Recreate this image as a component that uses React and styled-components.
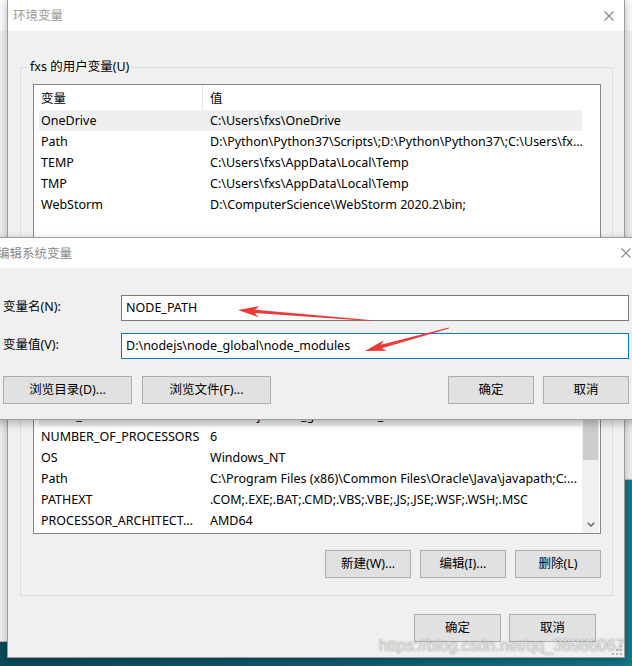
import React from "react";
import styled, { createGlobalStyle } from "styled-components";

const FONT = `"Noto Sans", "Noto Sans CJK SC", sans-serif`;

const GlobalStyle = createGlobalStyle`
  html, body { margin: 0; padding: 0; }
  body { background: #0e5f70; overflow: hidden; }
  * { box-sizing: border-box; }
`;

const Desktop = styled.div`
  position: relative;
  width: 632px;
  height: 666px;
  overflow: hidden;
  background: linear-gradient(90deg, #0b4b5a 0%, #0e5f70 55%, #137a8b 100%);
  font-family: ${FONT};
  font-size: 12.5px;
  color: #000;
`;

const BackWindow = styled.div`
  position: absolute;
  left: ${(p) => p.$left}px;
  top: ${(p) => p.$top}px;
  width: ${(p) => p.$width}px;
  height: ${(p) => p.$height}px;
  background: linear-gradient(#fbfbfb 0 31px, #f0f0f0 31px);
  border: 1px solid #b8b8b8;
`;

const Window = styled.div`
  position: absolute;
  left: ${(p) => p.$left}px;
  top: ${(p) => p.$top}px;
  width: ${(p) => p.$width}px;
  height: ${(p) => p.$height}px;
  display: flex;
  flex-direction: column;
  background: #f0f0f0;
  border: 1px solid #9c9c9c;
  box-shadow: 0 3px 9px rgba(0, 0, 0, 0.28);
`;

const TitleBar = styled.div`
  flex: none;
  height: ${(p) => p.$h}px;
  background: #fff;
  display: flex;
  align-items: center;
  justify-content: space-between;
  padding: 0 ${(p) => p.$pr}px 0 ${(p) => p.$pl}px;
  color: ${(p) => p.$color};
  font-size: 12.5px;
  white-space: nowrap;
`;

const TitleText = styled.span`
  padding-bottom: 2px;
`;

const CloseGlyph = styled.svg`
  flex: none;
  display: block;
`;

const CloseIcon = () => (
  <CloseGlyph width="10" height="10" viewBox="0 0 10 10">
    <path d="M0.5 0.5 L9.5 9.5 M9.5 0.5 L0.5 9.5" stroke="#858585" strokeWidth="1.1" fill="none" />
  </CloseGlyph>
);

const MainBody = styled.div`
  flex: 1;
  display: flex;
  flex-direction: column;
  padding: 0 11px 0 12px;
`;

const GroupBox = styled.fieldset`
  margin: ${(p) => p.$mt}px 0 0 0;
  padding: 9px 11px 17px 12px;
  border: 1px solid #dcdcdc;
  min-width: 0;
  display: flex;
  flex-direction: column;
  gap: 16px;
`;

const Legend = styled.legend`
  padding: 0 2px;
  margin-left: -5px;
  line-height: 15px;
  height: 16px;
  font-size: 12.5px;
`;

const ListBox = styled.div`
  flex: none;
  height: ${(p) => p.$h}px;
  border: 1px solid #828790;
  background: #fff;
  display: flex;
  overflow: hidden;
`;

const ListContent = styled.div`
  flex: none;
  width: 548px;
  padding-left: 5px;
  overflow: hidden;
`;

const HeaderRow = styled.div`
  display: grid;
  grid-template-columns: 164px 379px;
  height: 25px;
`;

const HeaderCell = styled.div`
  display: flex;
  align-items: center;
  padding-left: ${(p) => (p.$first ? 2 : 7)}px;
  padding-bottom: 1px;
  border-right: ${(p) => (p.$first ? "1px solid #e5e5e5" : "none")};
`;

const Row = styled.div`
  display: grid;
  grid-template-columns: 164px 379px;
  height: 21px;
  background: ${(p) => (p.$selected ? "#efefef" : "transparent")};
`;

const Cell = styled.div`
  line-height: 21px;
  padding-left: ${(p) => (p.$first ? 2 : 7)}px;
  white-space: nowrap;
  overflow: hidden;
`;

const VScroll = styled.div`
  flex: none;
  width: 17px;
  background: #f0f0f0;
  display: flex;
  flex-direction: column;
  align-items: center;
`;

const ScrollArrow = styled.div`
  flex: none;
  width: 17px;
  height: 17px;
  display: flex;
  align-items: center;
  justify-content: center;
`;

const ScrollThumb = styled.div`
  flex: none;
  width: 15px;
  height: ${(p) => p.$h}px;
  background: #cdcdcd;
`;

const ScrollTrack = styled.div`
  flex: 1;
`;

const Chevron = ({ up }) => (
  <svg width="8" height="5" viewBox="0 0 8 5">
    <path
      d={up ? "M0.7 4.3 L4 1 L7.3 4.3" : "M0.7 0.7 L4 4 L7.3 0.7"}
      stroke="#606060"
      strokeWidth="1.3"
      fill="none"
    />
  </svg>
);

const ButtonRow = styled.div`
  display: flex;
  justify-content: ${(p) => p.$justify || "flex-end"};
  gap: ${(p) => p.$gap ?? 9}px;
  margin: ${(p) => p.$margin || "0"};
`;

const Button = styled.button`
  flex: none;
  width: ${(p) => p.$w}px;
  height: 28px;
  padding: 0 0 1px 0;
  border: 1px solid #adadad;
  background: #e1e1e1;
  font-family: ${FONT};
  font-size: 12.5px;
  line-height: 16px;
  color: #000;
  white-space: nowrap;
`;

const DialogBody = styled.div`
  flex: 1;
  display: flex;
  flex-direction: column;
  padding: 27px 21px 0 11px;
`;

const FieldGrid = styled.div`
  display: grid;
  grid-template-columns: 118px 1fr;
  row-gap: 12px;
  align-items: center;
`;

const FieldLabel = styled.label`
  white-space: nowrap;
  line-height: 16px;
  padding-bottom: 2px;
`;

const TextInput = styled.input`
  height: 26px;
  width: 100%;
  margin: 0;
  padding: 0 0 1px 4px;
  border: 1px solid ${(p) => (p.$focused ? "#0078d7" : "#7a7a7a")};
  background: #fff;
  font-family: ${FONT};
  font-size: 12.5px;
  color: #000;
  outline: none;
`;

const Overlay = styled.svg`
  position: absolute;
  left: 0;
  top: 0;
  pointer-events: none;
`;

const Grip = styled.svg`
  position: absolute;
  right: 2px;
  bottom: 2px;
`;

const Watermark = styled.div`
  position: absolute;
  left: 379px;
  top: 638px;
  font-family: "Liberation Sans", Arial, sans-serif;
  font-size: 16px;
  line-height: 16px;
  white-space: nowrap;
  color: rgba(255, 255, 255, 0.7);
  text-shadow: 0 0 1.5px rgba(0, 0, 0, 0.5);
  pointer-events: none;
`;

const userVars = [
  { name: "OneDrive", value: "C:\\Users\\fxs\\OneDrive", selected: true },
  { name: "Path", value: "D:\\Python\\Python37\\Scripts\\;D:\\Python\\Python37\\;C:\\Users\\fx..." },
  { name: "TEMP", value: "C:\\Users\\fxs\\AppData\\Local\\Temp" },
  { name: "TMP", value: "C:\\Users\\fxs\\AppData\\Local\\Temp" },
  { name: "WebStorm", value: "D:\\ComputerScience\\WebStorm 2020.2\\bin;" },
];

const systemVars = [
  { name: "ComSpec", value: "C:\\WINDOWS\\system32\\cmd.exe" },
  { name: "DriverData", value: "C:\\Windows\\System32\\Drivers\\DriverData" },
  { name: "NODE_PATH", value: "D:\\nodejs\\node_global\\node_modules", selected: true },
  { name: "NUMBER_OF_PROCESSORS", value: "6" },
  { name: "OS", value: "Windows_NT" },
  { name: "Path", value: "C:\\Program Files (x86)\\Common Files\\Oracle\\Java\\javapath;C:..." },
  { name: "PATHEXT", value: ".COM;.EXE;.BAT;.CMD;.VBS;.VBE;.JS;.JSE;.WSF;.WSH;.MSC" },
  { name: "PROCESSOR_ARCHITECT...", value: "AMD64" },
];

const VarList = ({ rows, height, scroll }) => (
  <ListBox $h={height}>
    <ListContent>
      <HeaderRow>
        <HeaderCell $first>变量</HeaderCell>
        <HeaderCell>值</HeaderCell>
      </HeaderRow>
      {rows.map((r) => (
        <Row key={r.name + r.value} $selected={r.selected}>
          <Cell $first>{r.name}</Cell>
          <Cell>{r.value}</Cell>
        </Row>
      ))}
    </ListContent>
    {scroll && (
      <VScroll>
        <ScrollArrow>
          <Chevron up />
        </ScrollArrow>
        <ScrollThumb $h={105} />
        <ScrollTrack />
        <ScrollArrow>
          <Chevron />
        </ScrollArrow>
      </VScroll>
    )}
  </ListBox>
);

const Arrow = ({ x, y, angle, length }) => (
  <g transform={`translate(${x} ${y}) rotate(${angle})`}>
    <polygon
      points={`0,0 21,-5.5 17,-1.7 ${length},-0.5 ${length},0.5 17,1.7 21,5.5`}
      fill="#ee3a36"
    />
  </g>
);

export default function App() {
  return (
    <>
      <GlobalStyle />
      <Desktop>
        <BackWindow $left={-200} $top={-1} $width={208} $height={643} />
        <BackWindow $left={620} $top={-1} $width={40} $height={481} />

        <Window $left={7} $top={-1} $width={618} $height={659}>
          <TitleBar $h={31} $pl={5} $pr={10} $color="#9a9a9a">
            <TitleText>环境变量</TitleText>
            <CloseIcon />
          </TitleBar>
          <MainBody>
            <GroupBox $mt={28}>
              <Legend>fxs 的用户变量(U)</Legend>
              <VarList rows={userVars} height={160} />
              <ButtonRow>
                <Button $w={86}>新建(N)...</Button>
                <Button $w={86}>编辑(E)...</Button>
                <Button $w={86}>删除(D)</Button>
              </ButtonRow>
            </GroupBox>
            <GroupBox $mt={6}>
              <Legend>系统变量(S)</Legend>
              <VarList rows={systemVars} height={197} scroll />
              <ButtonRow>
                <Button $w={86}>新建(W)...</Button>
                <Button $w={86}>编辑(I)...</Button>
                <Button $w={86}>删除(L)</Button>
              </ButtonRow>
            </GroupBox>
            <ButtonRow $gap={8} $margin="18px 17px 0 0">
              <Button $w={87}>确定</Button>
              <Button $w={87}>取消</Button>
            </ButtonRow>
          </MainBody>
          <Grip width="10" height="10" viewBox="0 0 10 10">
            <g fill="#b5b5b5">
              <rect x="8" y="0" width="2" height="2" />
              <rect x="8" y="4" width="2" height="2" />
              <rect x="4" y="4" width="2" height="2" />
              <rect x="8" y="8" width="2" height="2" />
              <rect x="4" y="8" width="2" height="2" />
              <rect x="0" y="8" width="2" height="2" />
            </g>
          </Grip>
        </Window>

        <Window $left={-9} $top={237} $width={660} $height={183}>
          <TitleBar $h={30} $pl={5} $pr={19} $color="#888">
            <TitleText>编辑系统变量</TitleText>
            <CloseIcon />
          </TitleBar>
          <DialogBody>
            <FieldGrid>
              <FieldLabel>变量名(N):</FieldLabel>
              <TextInput readOnly value="NODE_PATH" />
              <FieldLabel>变量值(V):</FieldLabel>
              <TextInput readOnly $focused value="D:\nodejs\node_global\node_modules" />
            </FieldGrid>
            <ButtonRow $justify="space-between" $gap={0} $margin="17px 0 0 0">
              <ButtonRow $gap={10}>
                <Button $w={129}>浏览目录(D)...</Button>
                <Button $w={129}>浏览文件(F)...</Button>
              </ButtonRow>
              <ButtonRow $gap={9}>
                <Button $w={86}>确定</Button>
                <Button $w={86}>取消</Button>
              </ButtonRow>
            </ButtonRow>
          </DialogBody>
        </Window>

        <Overlay width="632" height="666" viewBox="0 0 632 666">
          <Arrow x={238} y={310} angle={4.6} length={132} />
          <Arrow x={365} y={351} angle={-15.3} length={87} />
        </Overlay>

        <Watermark>https://blog.csdn.net/qq_36986067</Watermark>
      </Desktop>
    </>
  );
}
